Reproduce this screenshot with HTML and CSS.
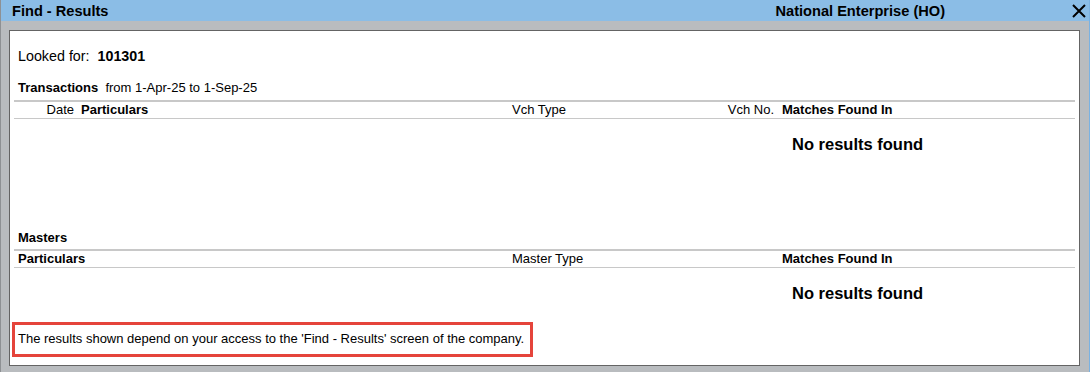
FILE: index.html
```
<!DOCTYPE html>
<html lang="en">
<head>
  <meta charset="UTF-8">
  <title>Find - Results</title>
  <link rel="stylesheet" href="styles.css">
</head>
<body>
  <div class="window">
    <div class="titlebar">
      <span class="title">Find - Results</span>
      <span class="company">National Enterprise (HO)</span>
      <svg class="close" width="14" height="14" viewBox="0 0 14 14">
        <path d="M1 1 L13 13 M13 1 L1 13" stroke="#000" stroke-width="2" fill="none"/>
      </svg>
    </div>
    <div class="panel">
      <div class="looked">Looked for:&nbsp; <b>101301</b></div>

      <div class="section-title"><b>Transactions</b>&nbsp; from 1-Apr-25 to 1-Sep-25</div>
      <div class="cols trans-cols">
        <span class="c-date">Date</span>
        <b>Particulars</b>
        <span>Vch Type</span>
        <span class="c-no">Vch No.</span>
        <b>Matches Found In</b>
      </div>
      <div class="empty">No results found</div>

      <div class="section-title masters"><b>Masters</b></div>
      <div class="cols master-cols">
        <b class="c-part">Particulars</b>
        <span>Master Type</span>
        <b>Matches Found In</b>
      </div>
      <div class="empty">No results found</div>

      <div class="note">The results shown depend on your access to the 'Find - Results' screen of the company.</div>
    </div>
  </div>
</body>
</html>
```

FILE: styles.css
```
body {
  margin: 0;
  font-family: "Liberation Sans", Arial, sans-serif;
  color: #000;
}
.window {
  width: 1090px;
  height: 372px;
  box-sizing: border-box;
  border-left: 1px solid #8e9194;
  border-right: 1px solid #7ab2e2;
  background: #b9bcbf;
  display: flex;
  flex-direction: column;
}
.titlebar {
  height: 21px;
  background: #8bbde6;
  display: flex;
  align-items: center;
  font-size: 14.6px;
  font-weight: bold;
  padding-left: 11px;
}
.company {
  margin-left: auto;
  margin-right: 127px;
}
.close {
  margin-right: 3px;
}
.panel {
  flex: 1;
  margin: 9px 9px 6px 8px;
  background: #fff;
  border: 1px solid #646464;
  font-size: 13px;
  padding: 0 4px;
}
.looked {
  font-size: 14.3px;
  line-height: 16px;
  margin-top: 17px;
  padding-left: 4px;
}
.section-title {
  line-height: 16px;
  margin-top: 16px;
  padding-left: 4px;
}
.section-title.masters {
  margin-top: 76px;
}
.cols {
  display: grid;
  border-top: 2px solid #c8c8c8;
  border-bottom: 1px solid #c8c8c8;
  line-height: 16px;
  margin-top: 4px;
}
.trans-cols {
  grid-template-columns: 67px 431px 188px 82px 1fr;
}
.c-date, .c-no {
  text-align: right;
  padding-right: 7px;
}
.c-no {
  padding-right: 8px;
}
.master-cols {
  grid-template-columns: 498px 270px 1fr;
  margin-top: 3px;
}
.c-part {
  padding-left: 4px;
}
.empty {
  font-size: 16.5px;
  font-weight: bold;
  line-height: 20px;
  margin-top: 15px;
  padding-left: 778px;
}
.note {
  display: inline-block;
  border: 3px solid #e5443b;
  margin-top: 19px;
  margin-left: -2px;
  padding: 6px 0 7px 3px;
  width: 512px;
  line-height: 16px;
}
```
